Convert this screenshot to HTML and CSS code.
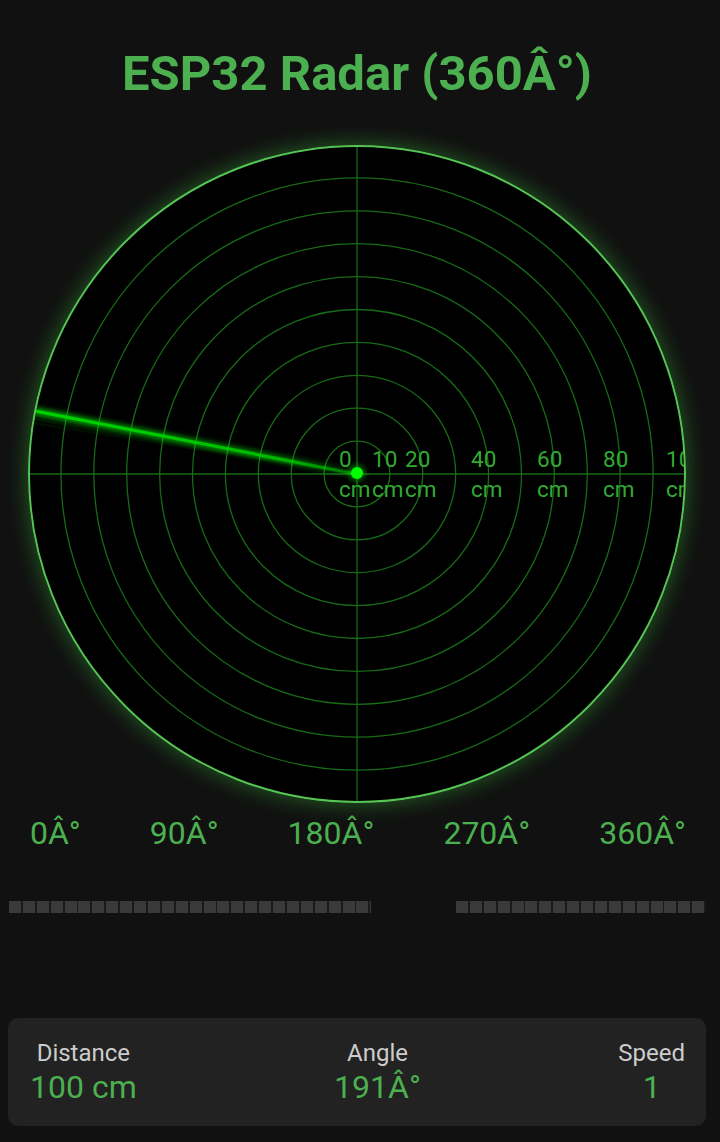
FILE: index.html
```html
<!DOCTYPE html>
<html>
<head>
<meta charset="utf-8">
<link rel="stylesheet" href="styles.css">
</head>
<body>
<div class="app">
  <h1 class="title">ESP32 Radar (360Â°)</h1>
  <div class="radar">
    <svg class="radar-svg" viewBox="0 0 658 658" width="658" height="658">
      <defs>
        <clipPath id="clip"><circle cx="329" cy="329" r="328"/></clipPath>
        <linearGradient id="sweepGrad" gradientUnits="userSpaceOnUse" x1="329" y1="329" x2="7" y2="266">
          <stop offset="0" stop-color="#00ff00" stop-opacity="0.15"/>
          <stop offset="0.25" stop-color="#00e000" stop-opacity="0.65"/>
          <stop offset="1" stop-color="#00d400" stop-opacity="1"/>
        </linearGradient>
        <filter id="glow" x="-20%" y="-20%" width="140%" height="140%">
          <feGaussianBlur stdDeviation="2.5"/>
        </filter>
      </defs>
      <circle cx="329" cy="329" r="329" fill="#000"/>
      <g clip-path="url(#clip)">
        <g class="rings" fill="none" stroke="#176b17" stroke-width="1.3">
          <circle cx="329" cy="329" r="32.9"/>
          <circle cx="329" cy="329" r="65.8"/>
          <circle cx="329" cy="329" r="98.7"/>
          <circle cx="329" cy="329" r="131.6"/>
          <circle cx="329" cy="329" r="164.5"/>
          <circle cx="329" cy="329" r="197.4"/>
          <circle cx="329" cy="329" r="230.3"/>
          <circle cx="329" cy="329" r="263.2"/>
          <circle cx="329" cy="329" r="296.1"/>
          <line x1="0" y1="329" x2="658" y2="329"/>
          <line x1="329" y1="0" x2="329" y2="658"/>
        </g>
        <g class="trail" stroke="#00ff00" stroke-linecap="round">
          <line x1="329" y1="329" x2="6" y2="278" stroke-opacity="0.06" stroke-width="3"/>
          <line x1="329" y1="329" x2="6" y2="274" stroke-opacity="0.08" stroke-width="3"/>
          <line x1="329" y1="329" x2="6" y2="270" stroke-opacity="0.1" stroke-width="3"/>
        </g>
        <line x1="329" y1="329" x2="7" y2="266" stroke="url(#sweepGrad)" stroke-width="7" filter="url(#glow)" opacity="0.8"/>
        <line x1="329" y1="329" x2="7" y2="266" stroke="url(#sweepGrad)" stroke-width="3.2"/>
        <g class="labels" fill="#32aa32" font-size="22.5">
          <text x="311" y="322">0<tspan x="311" dy="30">cm</tspan></text>
          <text x="344" y="322">10<tspan x="344" dy="30">cm</tspan></text>
          <text x="377" y="322">20<tspan x="377" dy="30">cm</tspan></text>
          <text x="443" y="322">40<tspan x="443" dy="30">cm</tspan></text>
          <text x="509" y="322">60<tspan x="509" dy="30">cm</tspan></text>
          <text x="575" y="322">80<tspan x="575" dy="30">cm</tspan></text>
          <text x="638" y="322">100<tspan x="638" dy="30">cm</tspan></text>
        </g>
        <circle cx="329" cy="328" r="9" fill="#00ff00" opacity="0.35" filter="url(#glow)"/>
        <circle cx="329" cy="328" r="6" fill="#00ff00"/>
      </g>
      <circle cx="329" cy="329" r="328" fill="none" stroke="#55c455" stroke-width="2"/>
    </svg>
  </div>
  <div class="degrees">
    <span>0Â°</span>
    <span>90Â°</span>
    <span>180Â°</span>
    <span>270Â°</span>
    <span>360Â°</span>
  </div>
  <div class="bars">
    <div class="bar bar-left"></div>
    <div class="bar bar-right"></div>
  </div>
  <div class="panel">
    <div class="stat">
      <div class="stat-label">Distance</div>
      <div class="stat-value">100 cm</div>
    </div>
    <div class="stat">
      <div class="stat-label">Angle</div>
      <div class="stat-value">191Â°</div>
    </div>
    <div class="stat">
      <div class="stat-label">Speed</div>
      <div class="stat-value">1</div>
    </div>
  </div>
</div>
</body>
</html>
```
FILE: styles.css
```css
html, body {
  margin: 0;
  padding: 0;
  background: #111111;
}
body {
  font-family: Roboto, "Liberation Sans", sans-serif;
  width: 720px;
  height: 1142px;
  overflow: hidden;
}
.app {
  display: flex;
  flex-direction: column;
  align-items: center;
  padding: 44px 14px 0 8px;
}
.title {
  margin: 0;
  font-size: 49px;
  line-height: 60px;
  font-weight: 700;
  color: #4caf50;
  letter-spacing: 0;
}
.radar {
  margin-top: 41px;
  width: 658px;
  height: 658px;
  border-radius: 50%;
  box-shadow: 0 0 22px rgba(60, 200, 60, 0.45);
  position: relative;
}
.radar-svg {
  display: block;
  font-family: Roboto, "Liberation Sans", sans-serif;
}
.degrees {
  align-self: stretch;
  display: flex;
  justify-content: space-between;
  margin-top: 11px;
  padding: 0 20px 0 22px;
  font-size: 32px;
  line-height: 38px;
  color: #4caf50;
}
.bars {
  align-self: stretch;
  display: flex;
  justify-content: space-between;
  margin-top: 49px;
  padding-left: 1px;
}
.bar {
  height: 12px;
  background: repeating-linear-gradient(to right, #3a3a3a 0, #3a3a3a 12px, #1a1a1a 12px, #1a1a1a 13.9px);
  filter: blur(0.4px);
}
.bar-left {
  width: 362px;
}
.bar-right {
  width: 250px;
}
.panel {
  align-self: stretch;
  margin-top: 105px;
  background: #222222;
  border-radius: 10px;
  padding: 21px 21px 21px 22px;
  display: flex;
  justify-content: space-between;
  align-items: flex-start;
}
.stat {
  text-align: center;
}
.stat-label {
  font-size: 24px;
  line-height: 28px;
  color: #cccccc;
}
.stat-value {
  margin-top: 2px;
  font-size: 32px;
  line-height: 36px;
  color: #4caf50;
}
```
